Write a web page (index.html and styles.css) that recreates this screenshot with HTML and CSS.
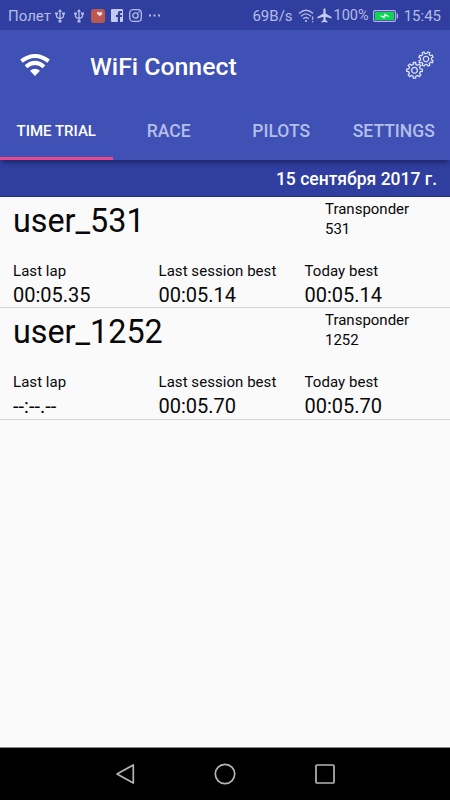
FILE: index.html
```html
<!DOCTYPE html>
<html lang="ru">
<head>
<meta charset="utf-8">
<title>WiFi Connect</title>
<link rel="stylesheet" href="styles.css">
</head>
<body>
<div class="status">
  <span class="carrier">Полет</span>
  <svg class="usb" width="10" height="14" viewBox="0 0 10 14"><path d="M5 1v12M1.500 4.500v2.500q0 2 3.500 2.500q3.500-.5 3.500-2.500V4.500" /><path class="solid" d="M5 0l2 3H3zM0 3.500h3v2H0zM7 3.500h3v2H7zM3.500 11h3v2.500h-3z"/></svg>
  <svg class="usb second" width="10" height="14" viewBox="0 0 10 14"><path d="M5 1v12M1.500 4.500v2.500q0 2 3.500 2.500q3.500-.5 3.500-2.500V4.500"/><path class="solid" d="M5 0l2 3H3zM0 3.500h3v2H0zM7 3.500h3v2H7zM3.500 11h3v2.500h-3z"/></svg>
  <svg class="health" width="14" height="14" viewBox="0 0 14 14"><rect width="14" height="14" rx="3" fill="#bb5950"/><path d="M8.700 7.300L6.200 4.800c-.9-1.800 1.300-2.700 2.400-1.300 1.400-1.500 3.500.1 2.500 1.700z" fill="#f3dce5"/></svg>
  <svg class="facebook" width="12" height="13" viewBox="0 0 12 13"><path fill="#c5caf0" fill-rule="evenodd" d="M1 0h10q1 0 1 1v11q0 1-1 1H9V8h2V6H9V4.800q0-.8.800-.8H11V2H9Q6.800 2 6.800 4.300V6H5v2h1.800v5H1q-1 0-1-1V1q0-1 1-1z"/></svg>
  <svg class="insta" width="13" height="13" viewBox="0 0 13 13"><rect x=".7" y=".7" width="11.600" height="11.600" rx="3.200"/><circle cx="6.500" cy="6.500" r="2.700"/><circle cx="9.900" cy="3.100" r=".3"/></svg>
  <svg class="more" width="12" height="3" viewBox="0 0 12 3"><path fill="#b4baea" d="M0 .5h2v2H0zM4.500.5h2v2h-2zM9 .5h2v2H9z"/></svg>
  <span class="speed">69B/s</span>
  <svg class="net" width="17" height="14" viewBox="0 0 17 14"><path d="M1 4.500q7-6.500 14 0M3 7.200q5-4.600 10 0M5.200 9.800q2.800-2.600 5.600 0"/><circle cx="8" cy="12" r="1.100" class="fillc"/><path d="M14.600 7.500v3.300M14.600 12v1.300"/></svg>
  <svg class="plane" width="15" height="15" viewBox="0 0 15 15"><path fill="#c5caf0" d="M6.400 1.500q1.100-2.300 2.200 0v4l6 3.600v1.500l-6-1.800v3.300l1.900 1.500v1L7.500 13.900l-3 .7v-1l1.900-1.500V8.800l-6 1.800V9.100l6-3.600z"/></svg>
  <span class="percent">100%</span>
  <svg class="battery" width="26" height="12" viewBox="0 0 26 12"><rect x=".6" y=".6" width="21.800" height="10.800" rx="1.300" fill="none" stroke="#aeb6e6" stroke-width="1.100"/><rect x="2" y="2" width="19" height="8" fill="#12d454"/><path d="M24.300 3.500v5" stroke="#aeb6e6" stroke-width="1.400"/><path d="M6 5.500l5 .4.500-2.400L17 6.600l-5-.3-.6 2.200z" fill="#eafff0"/></svg>
  <span class="clock">15:45</span>
</div>
<header class="bar">
  <svg class="wifi" width="30" height="22" viewBox="0 0 30 22"><path d="M1.400 7.200Q15-3.200 28.600 7.200M6 12.700Q15 5 24 12.700"/><path class="solid" d="M10 16.800q5-4.200 10 0L15 22z"/></svg>
  <h1>WiFi Connect</h1>
  <svg class="gears" width="30" height="30" viewBox="0 0 30 30">
    <defs><g id="gear"><path d="M5.800-1.400L7.800-1.100V1.100L5.800 1.400L5.090 3.110L6.290 4.740L4.740 6.290L3.110 5.090L1.400 5.800L1.100 7.800H-1.100L-1.400 5.800L-3.110 5.090L-4.740 6.290L-6.290 4.740L-5.090 3.110L-5.800 1.400L-7.800 1.100V-1.100L-5.800-1.400L-5.090-3.110L-6.290-4.740L-4.740-6.290L-3.110-5.090L-1.400-5.800L-1.100-7.800H1.100L1.400-5.800L3.110-5.090L4.740-6.290L6.290-4.740L5.090-3.110Z"/><circle r="2.900"/></g></defs>
    <use href="#gear" transform="translate(8.500 19.300)"/><use href="#gear" transform="translate(20 8) rotate(22) scale(.93)"/>
  </svg>
</header>
<nav class="tabs">
  <span class="tab active">TIME TRIAL</span><span class="tab">RACE</span><span class="tab">PILOTS</span><span class="tab">SETTINGS</span>
</nav>
<div class="date">15 сентября 2017 г.</div>
<main>
  <section class="pilot">
    <div class="top"><h2>user_531</h2><div class="transponder">Transponder<br>531</div></div>
    <div class="stats">
      <div><p>Last lap</p><b>00:05.35</b></div>
      <div><p>Last session best</p><b>00:05.14</b></div>
      <div><p>Today best</p><b>00:05.14</b></div>
    </div>
  </section>
  <section class="pilot">
    <div class="top"><h2>user_1252</h2><div class="transponder">Transponder<br>1252</div></div>
    <div class="stats">
      <div><p>Last lap</p><b>--:--.--</b></div>
      <div><p>Last session best</p><b>00:05.70</b></div>
      <div><p>Today best</p><b>00:05.70</b></div>
    </div>
  </section>
</main>
<footer class="nav">
  <svg width="20" height="22" viewBox="0 0 20 22"><path d="M18.300 2v18L2 11z"/></svg>
  <svg width="22" height="22" viewBox="0 0 22 22"><circle cx="11" cy="11" r="9.700"/></svg>
  <svg width="20" height="20" viewBox="0 0 20 20"><rect x="1" y="1" width="18" height="18" rx="1"/></svg>
</footer>
</body>
</html>
```
FILE: styles.css
```css
* { box-sizing: border-box; }
body {
  margin: 0;
  width: 450px;
  height: 800px;
  display: flex;
  flex-direction: column;
  overflow: hidden;
  background: #fafafa;
  color: #080808;
  font-family: Roboto, "Noto Sans", sans-serif;
}
h1, h2, p { margin: 0; }
svg { flex: none; }
.status {
  height: 30px;
  display: flex;
  align-items: center;
  padding: 1px 9px 0 8px;
  background: #303f9f;
  color: #b4bbe8;
  font-size: 15px;
  line-height: 30px;
  white-space: nowrap;
}
.carrier { width: 47px; font-size: 15px; }
.usb, .insta, .net { fill: none; stroke: #b4bbe8; stroke-width: 1.300; }
.usb .solid, .net .fillc { fill: #b4bbe8; stroke: none; }
.second { margin-left: 9px; }
.health { margin-left: 7px; }
.facebook { margin-left: 6px; }
.insta { margin-left: 6px; }
.more { margin-left: 7px; }
.speed { margin-left: auto; }
.net { margin-left: 5px; }
.plane { margin-left: 2px; }
.percent { margin-left: 2px; font-size: 14.500px; }
.battery { margin-left: 4px; }
.clock { margin-left: 5px; }
.bar {
  height: 75px;
  display: flex;
  align-items: center;
  padding: 0 14px 4px 20px;
  background: #3f51b5;
}
.wifi { fill: none; stroke: #fff; stroke-width: 4; margin-top: -1px; }
.wifi .solid { fill: #fff; stroke: none; }
.bar h1 {
  margin: 2px 0 0 40px;
  font-size: 24.800px;
  font-weight: 500;
  line-height: 30px;
  color: #fff;
}
.gears { margin-left: auto; fill: none; stroke: #dfe4ff; stroke-width: 1.300; }
.tabs {
  position: relative;
  z-index: 1;
  height: 55px;
  display: grid;
  grid-template-columns: repeat(4, 1fr);
  background: #3f51b5;
  box-shadow: 0 5px 5px -2px rgba(0, 0, 30, .4);
}
.tab {
  padding-top: 2px;
  text-align: center;
  font-size: 17.500px;
  font-weight: 500;
  line-height: 48px;
  color: #b5bee9;
}
.tab.active {
  font-size: 15px;
  color: #fff;
  border-bottom: 3px solid #e9468c;
}
.date {
  height: 37px;
  padding-right: 13px;
  text-align: right;
  font-size: 17.500px;
  font-weight: 500;
  line-height: 39px;
  color: #fff;
  background: #303f9f;
  border-bottom: 1px solid #1e2d86;
}
main { flex: 1; }
.pilot {
  height: 111px;
  padding: 0 13px;
  border-bottom: 1px solid #d7d7d7;
}
.pilot + .pilot { height: 112px; }
.top { height: 64px; display: flex; justify-content: space-between; }
.top h2 { font-size: 32.300px; font-weight: 400; line-height: 48px; }
.transponder { width: 112px; padding-top: 2px; font-size: 15px; line-height: 20px; }
.stats { display: grid; grid-template-columns: 145.500px 146px 1fr; }
.stats p { font-size: 15px; line-height: 21px; letter-spacing: .05px; }
.stats b { display: block; font-size: 20px; font-weight: 400; line-height: 26px; }
.nav {
  height: 53px;
  display: flex;
  align-items: center;
  justify-content: center;
  gap: 79px;
  background: #000;
  border-top: 1px solid #888;
}
.nav svg { fill: none; stroke: #b5b5b5; stroke-width: 1.700; stroke-linejoin: round; }
```
